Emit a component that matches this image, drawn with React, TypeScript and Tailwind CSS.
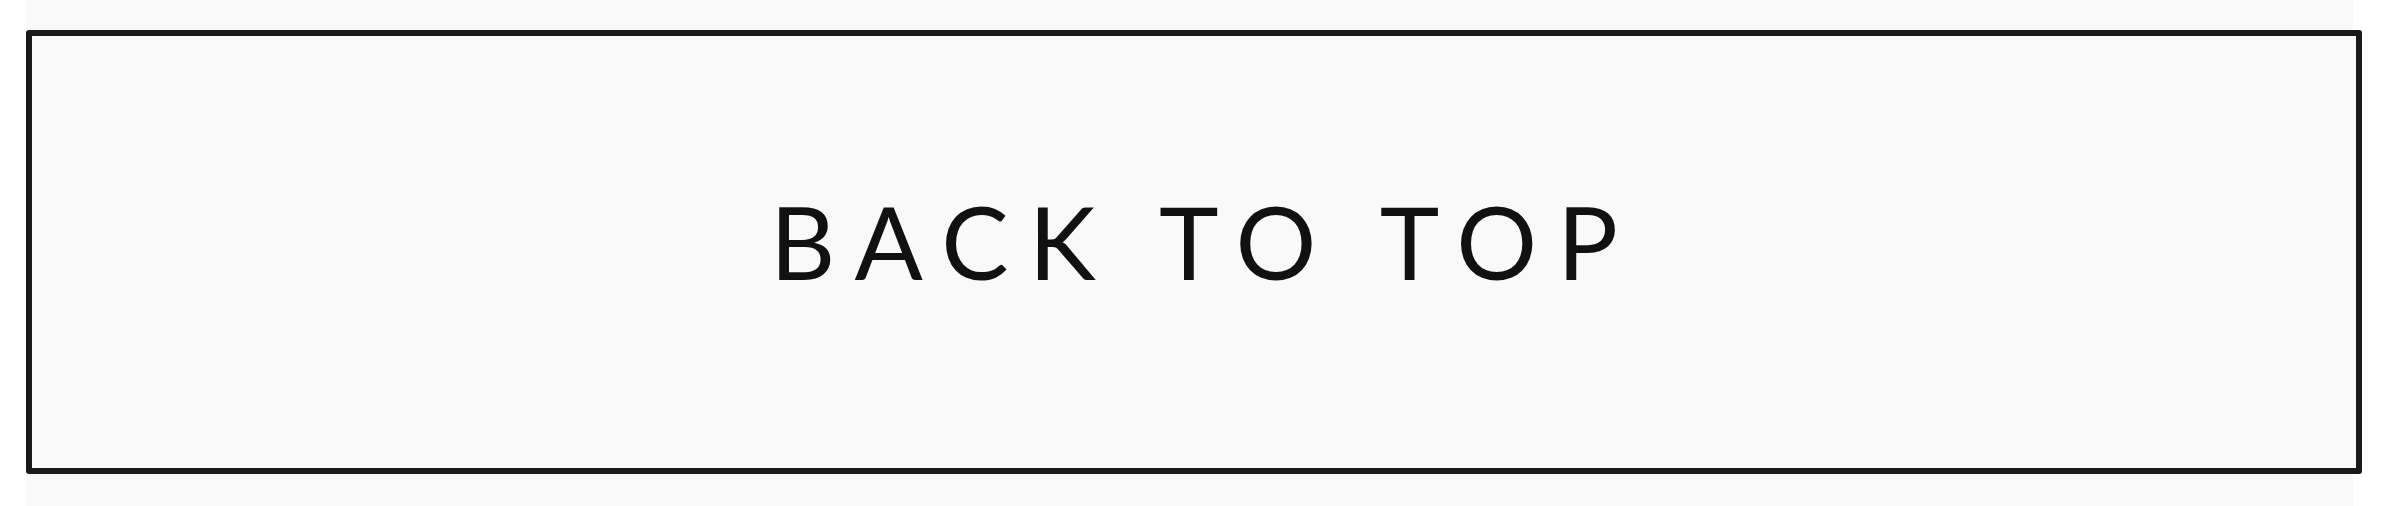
export default function App() {
  return (
    <div className="h-[506px] w-full overflow-hidden bg-white">
      <div className="ml-[26px] h-full w-[2327px] bg-[#f9f9f9] pt-[30px]">
        {/* outlined scroll-up button */}
        <button
          type="button"
          className="flex h-[444px] w-[2336px] items-center justify-center rounded-[3px] border-[6px] border-[#1a1a1a] bg-[#f9f9f9] pb-[22px]"
        >
          <span
            className="pl-[0.2em] text-[101px] font-normal leading-none tracking-[0.2em] text-[#111]"
            style={{ fontFamily: "Lato, 'Noto Sans', sans-serif" }}
          >
            BACK TO TOP
          </span>
        </button>
      </div>
    </div>
  );
}
